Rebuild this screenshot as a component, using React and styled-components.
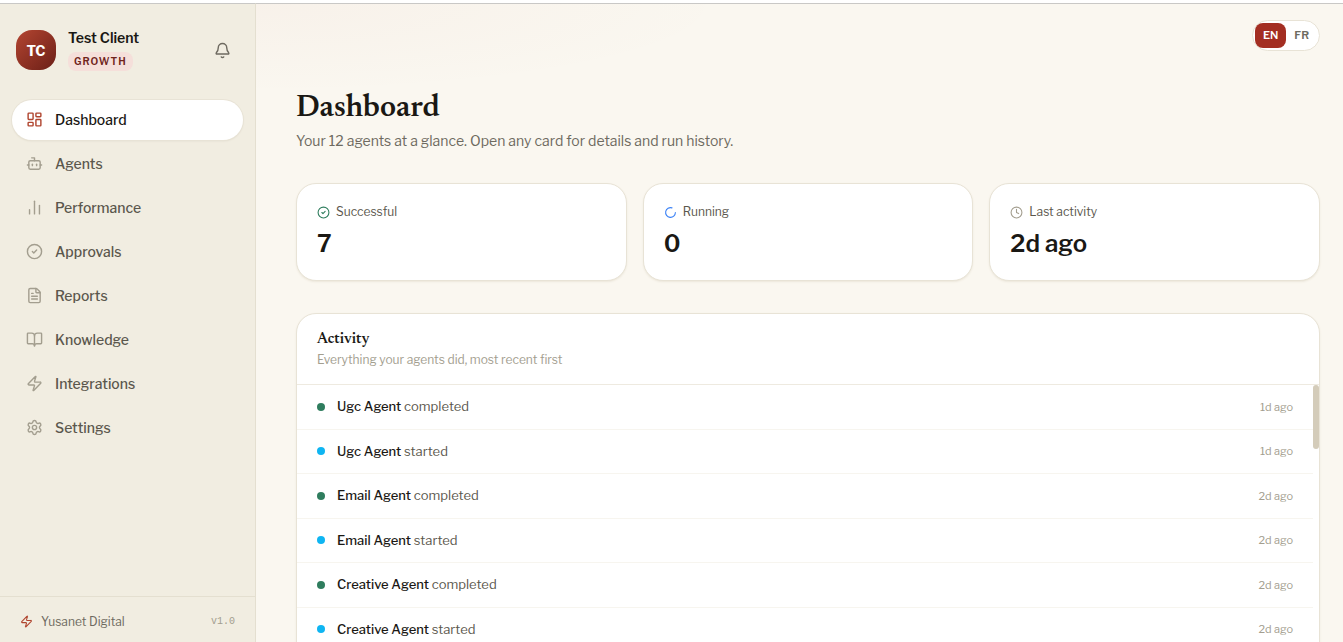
import React from "react";
import styled, { createGlobalStyle } from "styled-components";
import {
  Bell,
  BookOpen,
  Bot,
  ChartNoAxesColumn,
  CircleCheck,
  Clock,
  FileText,
  LayoutDashboard,
  LoaderCircle,
  Settings,
  Zap,
} from "lucide-react";

const GlobalStyle = createGlobalStyle`
  *, *::before, *::after {
    box-sizing: border-box;
  }
  body {
    margin: 0;
    color: #1a1814;
    background-color: #faf7f0;
    font-family: "Libre Franklin", "Liberation Sans", Arial, sans-serif;
    font-size: 14px;
  }
  h1, h2, p, ul, dl, dd {
    margin: 0;
    padding: 0;
  }
  ul {
    list-style: none;
  }
  a {
    color: inherit;
    text-decoration: none;
  }
  button {
    border: 0;
    background: none;
    font: inherit;
    cursor: pointer;
  }
`;

const Shell = styled.div`
  display: flex;
  height: 100vh;
  overflow: hidden;
  border-top: 3px solid #fff;
`;

const Sidebar = styled.aside`
  display: flex;
  flex-direction: column;
  flex: 0 0 256px;
  border-top: 1px solid #c9c8c6;
  border-right: 1px solid #e4dfd0;
  background-color: #f1ede1;
`;

const Account = styled.div`
  display: flex;
  align-items: center;
  gap: 12px;
  height: 92px;
  padding: 0 16px;
`;

const Avatar = styled.div`
  display: flex;
  align-items: center;
  justify-content: center;
  width: 40px;
  height: 40px;
  border-radius: 16px;
  background: linear-gradient(135deg, #b44531, #6b1f17);
  color: #fff;
  font-weight: 700;
`;

const AccountText = styled.div`
  flex: 1;
  padding-bottom: 2px;
  line-height: 20px;
`;

const AccountName = styled.div`
  font-weight: 600;
`;

const Plan = styled.span`
  display: block;
  width: fit-content;
  margin-top: 4px;
  padding: 0 6px;
  border-radius: 8px;
  background-color: #f5dfda;
  color: #6f241b;
  font-size: 10px;
  font-weight: 600;
  letter-spacing: 1px;
  line-height: 19px;
`;

const BellButton = styled.button`
  display: flex;
  padding: 8px;
  color: #6e6a60;
`;

const Nav = styled.nav`
  display: flex;
  flex: 1;
  flex-direction: column;
  gap: 4px;
  padding: 4px 12px;
`;

const NavLink = styled.a`
  display: flex;
  align-items: center;
  gap: 12px;
  height: 40px;
  padding: 0 14px 1px;
  border-radius: 20px;
  font-weight: 500;
  color: ${(props) => (props.$active ? "#1a1814" : "#5b574d")};
  background-color: ${(props) => (props.$active ? "#fff" : "transparent")};
  box-shadow: ${(props) =>
    props.$active ? "0 0 0 1px #e8e3d6, 0 1px 2px #ddd7c8" : "none"};
  svg {
    color: ${(props) => (props.$active ? "#b0452f" : "#a39e8f")};
  }
`;

const SidebarFooter = styled.footer`
  display: flex;
  align-items: center;
  gap: 8px;
  padding: 16px 20px 12px;
  border-top: 1px solid #e4dfd0;
  color: #6e6a60;
  font-size: 12px;
  line-height: 17px;
  svg {
    color: #b0452f;
  }
`;

const Version = styled.span`
  margin-left: auto;
  color: #a39e8f;
  font-family: "Liberation Mono", monospace;
  font-size: 10px;
`;

const Main = styled.main`
  flex: 1;
  min-width: 0;
  overflow: hidden;
  padding: 16px 23px 32px 40px;
  border-top: 1px solid #c9c8c6;
  background: radial-gradient(
      480px 90px at 0 0,
      rgba(180, 69, 49, 0.03),
      transparent
    )
    #faf7f0;
`;

const Toolbar = styled.div`
  display: flex;
  justify-content: flex-end;
`;

const LangSwitch = styled.div`
  display: flex;
  padding: 2px;
  border: 1px solid #e8e3d6;
  border-radius: 16px;
  background-color: #fff;
`;

const LangButton = styled.button`
  padding: 0 8px;
  border-radius: 8px;
  color: ${(props) => (props.$active ? "#fff" : "#6e6a60")};
  background-color: ${(props) => (props.$active ? "#a32e22" : "transparent")};
  font-size: 11px;
  font-weight: 600;
  line-height: 25px;
`;

const Title = styled.h1`
  margin-top: 40px;
  font-family: Newsreader, "Liberation Serif", serif;
  font-size: 31px;
  font-weight: 600;
  line-height: 36px;
`;

const Subtitle = styled.p`
  margin-top: 4px;
  color: #6e6a60;
  line-height: 20px;
`;

const Stats = styled.dl`
  display: grid;
  grid-template-columns: repeat(3, 1fr);
  gap: 16px;
  margin: 32px 0;
`;

const Card = styled.div`
  border: 1px solid #e8e3d6;
  border-radius: 20px;
  background-color: #fff;
  box-shadow: 0 1px 2px #ece7db;
`;

const Stat = styled(Card)`
  padding: 20px;
`;

const StatLabel = styled.dt`
  display: flex;
  align-items: center;
  gap: 6px;
  color: #5b574d;
  font-size: 12px;
  line-height: 16px;
  svg {
    color: ${(props) => props.$color};
  }
`;

const StatValue = styled.dd`
  margin-top: 8px;
  font-size: 24px;
  font-weight: 600;
  line-height: 32px;
`;

const PanelHeader = styled.header`
  padding: 16px 20px;
  border-bottom: 1px solid #eeeae0;
`;

const PanelTitle = styled.h2`
  font-family: Newsreader, "Liberation Serif", serif;
  font-size: 15px;
  font-weight: 600;
  line-height: 20px;
`;

const PanelNote = styled.p`
  margin-top: 2px;
  color: #a39e8f;
  font-size: 12px;
  line-height: 16px;
`;

const FeedArea = styled.div`
  position: relative;
  padding: 0 6px 20px 0;
`;

const ScrollThumb = styled.div`
  position: absolute;
  top: 0;
  right: 0;
  width: 6px;
  height: 64px;
  border-radius: 3px;
  background-color: #d4ccba;
`;

const FeedRow = styled.li`
  display: flex;
  align-items: center;
  gap: 12px;
  padding: 12px 20px;
  border-bottom: 1px solid #f7f5ef;
  color: #5b574d;
  font-size: 13px;
  line-height: 1.5;
  strong {
    color: #1a1814;
    font-weight: 500;
  }
  time {
    margin-left: auto;
    color: #a39e8f;
    font-size: 11px;
  }
`;

const Dot = styled.span`
  width: 8px;
  height: 8px;
  border-radius: 50%;
  background-color: ${(props) =>
    props.$status === "completed" ? "#2f7d5e" : "#0fb5f2"};
`;

const links = [
  { label: "Dashboard", icon: LayoutDashboard },
  { label: "Agents", icon: Bot },
  { label: "Performance", icon: ChartNoAxesColumn },
  { label: "Approvals", icon: CircleCheck },
  { label: "Reports", icon: FileText },
  { label: "Knowledge", icon: BookOpen },
  { label: "Integrations", icon: Zap },
  { label: "Settings", icon: Settings },
];

const stats = [
  { label: "Successful", value: "7", icon: CircleCheck, color: "#2f7d5e" },
  { label: "Running", value: "0", icon: LoaderCircle, color: "#3b82f6" },
  { label: "Last activity", value: "2d ago", icon: Clock, color: "#a39e8f" },
];

const events = [
  { agent: "Ugc Agent", status: "completed", when: "1d ago" },
  { agent: "Ugc Agent", status: "started", when: "1d ago" },
  { agent: "Email Agent", status: "completed", when: "2d ago" },
  { agent: "Email Agent", status: "started", when: "2d ago" },
  { agent: "Creative Agent", status: "completed", when: "2d ago" },
  { agent: "Creative Agent", status: "started", when: "2d ago" },
];

export default function App() {
  const [lang, setLang] = React.useState("EN");
  return (
    <Shell>
      <GlobalStyle />
      <Sidebar>
        <Account>
          <Avatar>TC</Avatar>
          <AccountText>
            <AccountName>Test Client</AccountName>
            <Plan>GROWTH</Plan>
          </AccountText>
          <BellButton aria-label="Notifications">
            <Bell size={17} strokeWidth={2} />
          </BellButton>
        </Account>
        <Nav>
          {links.map(({ label, icon: Icon }, i) => (
            <NavLink key={label} href="#" $active={i === 0}>
              <Icon size={17} strokeWidth={2} />
              {label}
            </NavLink>
          ))}
        </Nav>
        <SidebarFooter>
          <Zap size={13} />
          Yusanet Digital
          <Version>v1.0</Version>
        </SidebarFooter>
      </Sidebar>
      <Main>
        <Toolbar>
          <LangSwitch>
            {["EN", "FR"].map((code) => (
              <LangButton
                key={code}
                $active={lang === code}
                onClick={() => setLang(code)}
              >
                {code}
              </LangButton>
            ))}
          </LangSwitch>
        </Toolbar>
        <Title>Dashboard</Title>
        <Subtitle>
          Your 12 agents at a glance. Open any card for details and run history.
        </Subtitle>
        <Stats>
          {stats.map(({ label, value, icon: Icon, color }) => (
            <Stat key={label}>
              <StatLabel $color={color}>
                <Icon size={13} />
                {label}
              </StatLabel>
              <StatValue>{value}</StatValue>
            </Stat>
          ))}
        </Stats>
        <Card as="section">
          <PanelHeader>
            <PanelTitle>Activity</PanelTitle>
            <PanelNote>Everything your agents did, most recent first</PanelNote>
          </PanelHeader>
          <FeedArea>
            <ul>
              {events.map(({ agent, status, when }) => (
                <FeedRow key={agent + status}>
                  <Dot $status={status} />
                  <span>
                    <strong>{agent}</strong> {status}
                  </span>
                  <time>{when}</time>
                </FeedRow>
              ))}
            </ul>
            <ScrollThumb />
          </FeedArea>
        </Card>
      </Main>
    </Shell>
  );
}
